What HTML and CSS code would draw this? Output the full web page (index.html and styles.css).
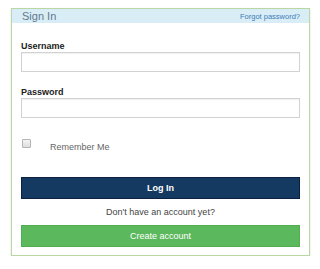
FILE: index.html
```html
<!DOCTYPE html>
<html lang="en">
<head>
    <meta charset="UTF-8">
    <meta name="viewport" content="width=device-width, initial-scale=1.0">
    <title>Sign In</title>
    <link rel="stylesheet" href="styles.css">
</head>
<body>
    <div class="login-panel">
        <div class="panel-heading">
            <span class="panel-title">Sign In</span>
            <a href="#" class="forgot-link">Forgot password?</a>
        </div>
        <form class="panel-body">
            <label class="input-label" for="username">Username</label>
            <input type="text" id="username" class="input-field">

            <label class="input-label password-label" for="password">Password</label>
            <input type="password" id="password" class="input-field">

            <div class="remember-row">
                <input type="checkbox" id="remember" class="remember-box">
                <label for="remember" class="remember-label">Remember Me</label>
            </div>

            <button type="button" class="login-btn">Log In</button>
            <p class="signup-text">Don't have an account yet?</p>
            <button type="button" class="create-btn">Create account</button>
        </form>
    </div>
</body>
</html>
```

FILE: styles.css
```css
body {
    font-family: 'Liberation Sans', Arial, sans-serif;
    margin: 0;
    padding: 0;
    background-color: #fff;
    color: #333;
}

.login-panel {
    width: 299px;
    margin: 8px 0 0 11px;
    box-sizing: border-box;
    border: 1px solid #b9d6a3;
    background-color: #fff;
    box-shadow: 0 1px 2px rgba(0, 0, 0, 0.12);
}

.panel-heading {
    display: flex;
    justify-content: space-between;
    align-items: center;
    height: 14px;
    padding: 0 9px 0 10px;
    background-color: #d9edf7;
}

.panel-title {
    font-size: 11px;
    color: #62798b;
}

.forgot-link {
    font-size: 7.5px;
    color: #3c7bb5;
    text-decoration: none;
}

.panel-body {
    display: flex;
    flex-direction: column;
    padding: 17px 9px 8px 9px;
    margin: 0;
}

.input-label {
    font-size: 9px;
    font-weight: bold;
    line-height: 12px;
    color: #222;
}

.password-label {
    margin-top: 14px;
}

.input-field {
    height: 20px;
    width: 100%;
    margin: 0;
    box-sizing: border-box;
    border: 1px solid #d2d2d2;
    box-shadow: inset 0 1px 1px rgba(0, 0, 0, 0.06);
    font-size: 9px;
}

.remember-row {
    display: flex;
    align-items: flex-start;
    margin-top: 21px;
}

.remember-box {
    appearance: none;
    width: 9px;
    height: 9px;
    margin: 0 0 0 1px;
    border: 1px solid #b4b4b4;
    border-radius: 1px;
    background: linear-gradient(#f4f4f4, #dedede);
}

.remember-label {
    margin-left: 19px;
    padding-top: 2px;
    font-size: 9px;
    line-height: 12px;
    color: #666;
}

.login-btn,
.create-btn {
    height: 22px;
    width: 100%;
    border-radius: 0;
    font-family: inherit;
    font-size: 9px;
    color: #fff;
    cursor: pointer;
}

.login-btn {
    margin-top: 24px;
    background-color: #143a62;
    border: 1px solid #0a2040;
    font-weight: bold;
}

.signup-text {
    margin: 7px 0 0 0;
    font-size: 9px;
    line-height: 12px;
    text-align: center;
    color: #444;
}

.create-btn {
    margin-top: 7px;
    background-color: #5cb85c;
    border: 1px solid #52ae52;
}
```
